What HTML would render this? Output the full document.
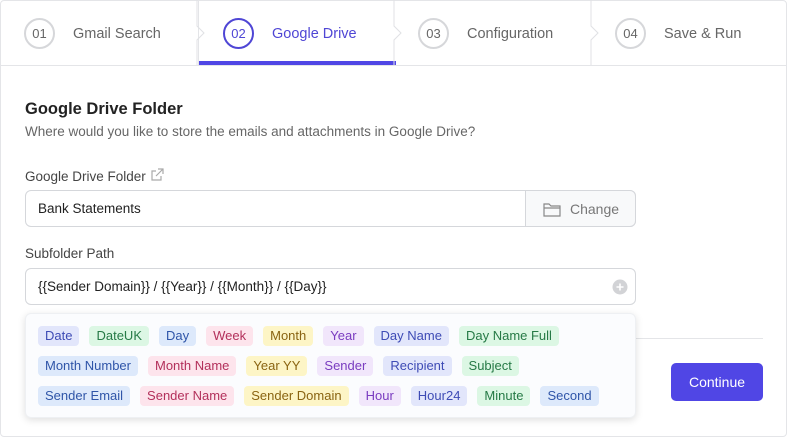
<!DOCTYPE html>
<html><head><style>
*{box-sizing:border-box;margin:0;padding:0}
body{width:788px;height:438px;background:#fff;font-family:"Liberation Sans",sans-serif;position:relative;overflow:hidden;color:#333}
.card{position:absolute;left:0;top:0;width:787px;height:437px;border:1px solid #e4e5e8;border-radius:4px}
.tabs{position:absolute;left:0;top:0;width:787px;height:66px;border-bottom:1px solid #e4e5e8}
.tab{position:absolute;top:0;height:65px;width:197px}
.num{position:absolute;left:24px;top:18px;width:31px;height:31px;border:2px solid #d6d7da;border-radius:50%;font-size:13px;color:#666;display:flex;align-items:center;justify-content:center}
.lbl{position:absolute;left:73px;top:26px;font-size:14.5px;color:#666}
.act .num{border-color:#4f46d5;color:#4f46d5}
.act .lbl{color:#4f46d5}
.act .bar{position:absolute;left:0;bottom:0;width:197px;height:4px;background:#5046e5}
.sep{position:absolute;top:0;width:12px;height:65px}
h2{position:absolute;left:25px;top:100px;font-size:16.5px;font-weight:bold;color:#222}
.sub{position:absolute;left:25px;top:124px;font-size:13.5px;color:#666}
.lab{position:absolute;left:25px;font-size:13.5px;color:#444}
.inp{position:absolute;left:25px;width:611px;height:37px;border:1px solid #d5d7db;border-radius:6px;font-size:13.5px;color:#222;padding:10px 12px}
.chg{position:absolute;left:525px;top:190px;width:111px;height:37px;background:#f8f9fa;border-radius:0 6px 6px 0;border:1px solid #d5d7db;color:#777;font-size:14px;padding:10px 0 0 44px}
.panel{position:absolute;left:25px;top:313px;width:611px;height:105px;background:#fbfcfe;border-radius:6px;box-shadow:0 2px 8px rgba(0,0,0,.13);border:1px solid #eef0f3}
.row{position:absolute;left:12px;display:flex;gap:10px}
.c{height:20px;line-height:20px;padding:0 7px;border-radius:4px;font-size:13px}
.b{background:#e2e6fb;color:#3e4bb5}.g{background:#dcf7e4;color:#267a46}.l{background:#dde9fb;color:#2f55a8}.p{background:#fde4ec;color:#b3305b}.y{background:#fdf5c6;color:#8a6412}.v{background:#f1e6fb;color:#7a3cc0}
.btn{position:absolute;left:671px;top:363px;width:92px;height:38px;background:#5046e5;border-radius:5px;color:#fff;font-size:14px;text-align:center;line-height:38px}
.hr{position:absolute;left:636px;top:338px;width:127px;height:1px;background:#e4e5e8}
</style></head><body>
<div class="card"></div>
<div class="tabs">
<div class="tab" style="left:0"><div class="num">01</div><div class="lbl">Gmail Search</div></div>
<div class="tab act" style="left:198px;border-left:1px solid #e4e5e8"><div class="num">02</div><div class="lbl">Google Drive</div><div class="bar"></div></div>
<div class="tab" style="left:394px"><div class="num">03</div><div class="lbl">Configuration</div></div>
<div class="tab" style="left:591px"><div class="num">04</div><div class="lbl">Save &amp; Run</div></div>
<svg class="sep" style="left:196px" viewBox="0 0 12 65"><path d="M1 0V26L8 33L1 40V65" fill="none" stroke="#e0e1e4"/></svg>
<svg class="sep" style="left:393px" viewBox="0 0 12 65"><path d="M1 0V26L8 33L1 40V65" fill="none" stroke="#e0e1e4"/></svg>
<svg class="sep" style="left:590px" viewBox="0 0 12 65"><path d="M1 0V26L8 33L1 40V65" fill="none" stroke="#e0e1e4"/></svg>
</div>
<h2>Google Drive Folder</h2>
<div class="sub">Where would you like to store the emails and attachments in Google Drive?</div>
<div class="lab" style="top:168px">Google Drive Folder <svg width="14" height="14" viewBox="0 0 14 14" style="vertical-align:-1px"><path d="M11 8v4H2V3h4M8 1h5v5M13 1L6 8" fill="none" stroke="#aaa" stroke-width="1.2"/></svg></div>
<div class="inp" style="top:190px">Bank Statements</div>
<div class="chg"><svg width="18" height="15" viewBox="0 0 18 15" style="position:absolute;left:17px;top:11px"><path d="M1 2h5l2 2h9v10H1z M1 6h16" fill="none" stroke="#888" stroke-width="1.2"/></svg>Change</div>
<div class="lab" style="top:246px">Subfolder Path</div>
<div class="inp" style="top:268px">{{Sender Domain}} / {{Year}} / {{Month}} / {{Day}}</div>
<svg width="16" height="16" viewBox="0 0 16 16" style="position:absolute;left:612px;top:279px"><circle cx="8" cy="8" r="7.5" fill="#d2d3d6"/><path d="M8 4.5v7M4.5 8h7" stroke="#fff" stroke-width="1.6"/></svg>
<div class="hr"></div>
<div class="btn">Continue</div>
<div class="panel">
<div class="row" style="top:12px"><span class="c b">Date</span><span class="c g">DateUK</span><span class="c l">Day</span><span class="c p">Week</span><span class="c y">Month</span><span class="c v">Year</span><span class="c b">Day Name</span><span class="c g">Day Name Full</span></div>
<div class="row" style="top:42px"><span class="c l">Month Number</span><span class="c p">Month Name</span><span class="c y">Year YY</span><span class="c v">Sender</span><span class="c b">Recipient</span><span class="c g">Subject</span></div>
<div class="row" style="top:72px"><span class="c l">Sender Email</span><span class="c p">Sender Name</span><span class="c y">Sender Domain</span><span class="c v">Hour</span><span class="c b">Hour24</span><span class="c g">Minute</span><span class="c l">Second</span></div>
</div>
</body></html>
